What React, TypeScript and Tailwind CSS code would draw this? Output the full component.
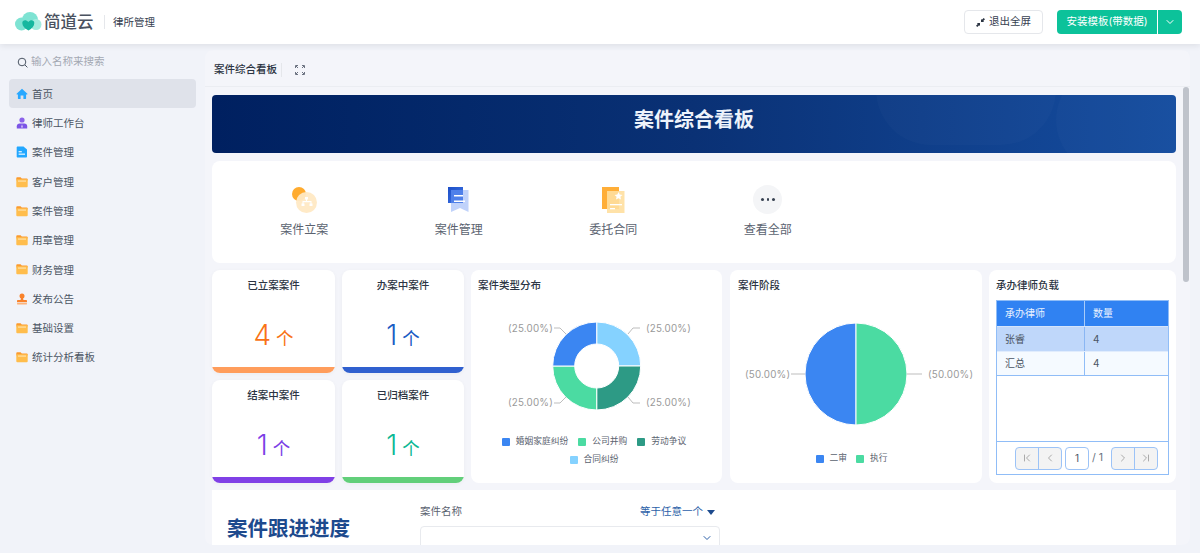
import { ChevronDown, ChevronFirst, ChevronLast, ChevronLeft, ChevronRight } from "lucide-react";

type IconKind = "home" | "user" | "file" | "folder" | "stamp";

const menu: { label: string; icon: IconKind; active?: boolean }[] = [
  { label: "首页", icon: "home", active: true },
  { label: "律师工作台", icon: "user" },
  { label: "案件管理", icon: "file" },
  { label: "客户管理", icon: "folder" },
  { label: "案件管理", icon: "folder" },
  { label: "用章管理", icon: "folder" },
  { label: "财务管理", icon: "folder" },
  { label: "发布公告", icon: "stamp" },
  { label: "基础设置", icon: "folder" },
  { label: "统计分析看板", icon: "folder" },
];

const stats = [
  { title: "已立案案件", value: "4", text: "text-[#f97316]", bar: "bg-[#ff9d5c]" },
  { title: "办案中案件", value: "1", text: "text-[#1a5cc4]", bar: "bg-[#3060cf]" },
  { title: "结案中案件", value: "1", text: "text-[#7c3fe6]", bar: "bg-[#8040e6]" },
  { title: "已归档案件", value: "1", text: "text-[#0cb894]", bar: "bg-[#62cf7a]" },
];

function MenuIcon({ kind }: { kind: IconKind }) {
  if (kind === "home") {
    return (
      <svg width="12" height="12" viewBox="0 0 12 12">
        <path d="M6 .8.6 5.8c-.2.3 0 .6.3.6h1v4.200c0 .3.2.5.5.5h2.200V7.600h2.800v3.500h2.200c.3 0 .5-.2.5-.5V6.400h1c.3 0 .5-.3.3-.6z" fill="#28a8ff" />
      </svg>
    );
  }
  if (kind === "user") {
    return (
      <svg width="12" height="12" viewBox="0 0 12 12">
        <circle cx="6" cy="3" r="2.600" fill="#8b62ea" />
        <path d="M.8 11.500V9.200c0-1.400 1.300-2.600 2.800-2.600h4.800c1.500 0 2.800 1.200 2.800 2.600v2.300z" fill="#7c55e6" />
        <path d="M6 7.200 5.100 10 6 11l.9-1z" fill="#d9ccfa" />
      </svg>
    );
  }
  if (kind === "file") {
    return (
      <svg width="12" height="12" viewBox="0 0 12 12">
        <path d="M1.800.4h5.700L11 3.600v6.900c0 .7-.5 1.100-1.100 1.100H1.800c-.7 0-1.100-.4-1.100-1.100V1.500C.7.900 1.100.4 1.800.4z" fill="#22a7ff" />
        <rect x="2.600" y="5.200" width="3.200" height="1.100" fill="#fff" />
        <rect x="2.600" y="7.600" width="6.400" height="1.100" fill="#fff" />
      </svg>
    );
  }
  if (kind === "stamp") {
    return (
      <svg width="12" height="12" viewBox="0 0 12 12">
        <circle cx="6" cy="2.900" r="2.500" fill="#f9822b" />
        <path d="M5 4.600h2l.4 2.400H10c.6 0 1 .4 1 1v1.200H1V8c0-.6.4-1 1-1h2.600z" fill="#f9822b" />
        <rect x="1" y="10" width="10" height="1.500" rx=".4" fill="#fdb27a" />
      </svg>
    );
  }
  return (
    <svg width="12" height="12" viewBox="0 0 12 12">
      <path d="M1.200 1.200h3.400l1.200 1.200h5c.5 0 .9.4.9.9v1H.3V2.100c0-.5.4-.9.9-.9z" fill="#fb9a2e" />
      <rect x=".3" y="3.200" width="11.400" height="8" rx="1" fill="#ffbd4d" />
      <rect x="2" y="4.600" width="8" height=".9" fill="#ffeec8" />
    </svg>
  );
}

function Logo() {
  return (
    <svg width="27" height="20" viewBox="0 0 27 20">
      <circle cx="6.500" cy="12" r="6.500" fill="#7ee3d3" />
      <circle cx="15" cy="8" r="8" fill="#7ee3d3" />
      <circle cx="21" cy="12.500" r="5.500" fill="#a5ecdf" />
      <path d="M13.500 18.500c-3.500-2-6.200-4.600-6.200-7.600 0-3 3.800-3.800 6-1 2.200-2.800 6-2 6 1 0 3-2.400 5.600-5.800 7.600z" fill="#16b79f" />
    </svg>
  );
}

function CaseFileIcon() {
  return (
    <svg width="25" height="26" viewBox="0 0 25 26">
      <circle cx="7" cy="7" r="7" fill="#ffab2e" />
      <circle cx="14.500" cy="15.500" r="10.500" fill="#ffe9c4" opacity="0.95" />
      <path d="M13 10h3v2.500h-1V14h4.500v2.500h1V19h-3v-2.500h1V15.200h-7v1.300h1V19H9.500v-2.500h1V14H14v-1.500h-1z" fill="#fff" />
    </svg>
  );
}

function CaseManageIcon() {
  return (
    <svg width="21" height="26" viewBox="0 0 21 26">
      <defs>
        <linearGradient id="docBlue" x1="0" y1="0" x2="1" y2="1">
          <stop offset="0" stopColor="#1c4fc7" />
          <stop offset="1" stopColor="#3f74e6" />
        </linearGradient>
      </defs>
      <rect x="0" y="0" width="15" height="16" fill="url(#docBlue)" />
      <path d="M3 3h17.500v22l-8.500-4-9 4z" fill="#b9cdfa" opacity="0.9" />
      <path d="M3 3h12v13H3z" fill="#4f80ea" />
      <rect x="6" y="8" width="9" height="1.500" fill="#fff" />
      <rect x="6" y="13.500" width="11" height="1.500" fill="#fff" />
    </svg>
  );
}

function ContractIcon() {
  return (
    <svg width="23" height="26" viewBox="0 0 23 26">
      <rect x="0" y="0" width="17" height="22" fill="#ffae38" />
      <rect x="5" y="4" width="17.500" height="22" fill="#ffdf9f" opacity="0.9" />
      <path d="m16.500 5 1.200 2.600 2.800.3-2.100 1.900.6 2.800-2.500-1.400-2.500 1.400.6-2.800-2.100-1.900 2.800-.3z" fill="#fff" />
      <rect x="8" y="17" width="12" height="1.300" fill="#fff" />
      <rect x="8" y="21" width="5" height="1.300" fill="#fff" />
    </svg>
  );
}

function Legend({ color, label }: { color: string; label: string }) {
  return (
    <span className="flex items-center gap-[6px]">
      <span className={`w-2 h-2 rounded-[1px] ${color}`} />
      {label}
    </span>
  );
}

function StatCard({ title, value, text, bar }: (typeof stats)[number]) {
  return (
    <div className="h-[103px] bg-white rounded-lg overflow-hidden flex flex-col shadow-[0_1px_4px_rgba(0,0,0,0.04)]">
      <div className="flex-1 text-center pt-[9px]">
        <div className="text-[10.5px] leading-[14px] font-medium text-[#2b3442]">{title}</div>
        <div className={`mt-[25px] flex items-end justify-center gap-[5px] ${text}`}>
          <span className="text-[28px] leading-[34px] font-light">{value}</span>
          <span className="text-[17.5px] leading-[27px]">个</span>
        </div>
      </div>
      <div className={`h-[6px] ${bar}`} />
    </div>
  );
}

function DonutChart() {
  const cx = 125.7;
  const cy = 96;
  return (
    <svg width="251" height="150" viewBox="0 23 251 150" className="block">
      <g stroke="#fff" strokeWidth="1">
        <path fill="#85d2ff" d={`M${cx} ${cy - 44}A44 44 0 0 1 ${cx + 44} ${cy}H${cx + 22}A22 22 0 0 0 ${cx} ${cy - 22}Z`} />
        <path fill="#2d9a85" d={`M${cx + 44} ${cy}A44 44 0 0 1 ${cx} ${cy + 44}V${cy + 22}A22 22 0 0 0 ${cx + 22} ${cy}Z`} />
        <path fill="#4bdba2" d={`M${cx} ${cy + 44}A44 44 0 0 1 ${cx - 44} ${cy}H${cx - 22}A22 22 0 0 0 ${cx} ${cy + 22}Z`} />
        <path fill="#3b86f2" d={`M${cx - 44} ${cy}A44 44 0 0 1 ${cx} ${cy - 44}V${cy - 22}A22 22 0 0 0 ${cx - 22} ${cy}Z`} />
      </g>
      <g fill="none" stroke="#bdbdbd" strokeWidth="1">
        <path d="M157 64l5-6h7" />
        <path d="M157 127l5 6h7" />
        <path d="M95 64l-6-6h-6" />
        <path d="M95 127l-6 6h-6" />
      </g>
      <g fill="#9a9a9a" fontSize="9.800" letterSpacing="0.2">
        <text x="175" y="62">(25.00%)</text>
        <text x="175" y="136">(25.00%)</text>
        <text x="37" y="62">(25.00%)</text>
        <text x="37" y="136">(25.00%)</text>
      </g>
    </svg>
  );
}

function PieChart() {
  const cx = 126;
  const cy = 104;
  return (
    <svg width="252" height="150" viewBox="0 23 252 150" className="block">
      <path d={`M${cx} ${cy - 51}A51 51 0 0 0 ${cx} ${cy + 51}Z`} fill="#3b86f2" stroke="#fff" />
      <path d={`M${cx} ${cy - 51}A51 51 0 0 1 ${cx} ${cy + 51}Z`} fill="#4bdba2" stroke="#fff" />
      <path d="M177 104h15M61 104h14" stroke="#bdbdbd" fill="none" />
      <g fill="#9a9a9a" fontSize="9.800" letterSpacing="0.2">
        <text x="198" y="108">(50.00%)</text>
        <text x="15" y="108">(50.00%)</text>
      </g>
    </svg>
  );
}

function LoadTable() {
  return (
    <div className="mx-[7px] h-[175px] border border-[#90bdf7] flex flex-col text-[10px] text-[#4b5563]">
      <div className="grid grid-cols-[88px_1fr] h-[25px] items-center bg-[#3082f2] text-[#eaf2ff]">
        <div className="px-2 h-full flex items-center border-r border-[#a9ccf9]">承办律师</div>
        <div className="px-2">数量</div>
      </div>
      <div className="grid grid-cols-[88px_1fr] h-[25px] items-center bg-[#bfd7fa] border-t border-[#d4e4fb]">
        <div className="px-2 h-full flex items-center border-r border-[#8ab6f3]">张睿</div>
        <div className="px-2">4</div>
      </div>
      <div className="grid grid-cols-[88px_1fr] h-[25px] items-center bg-[#f5faff] border-t border-[#e0ecfd] border-b border-b-[#90bdf7]">
        <div className="px-2 h-full flex items-center border-r border-[#90bdf7]">汇总</div>
        <div className="px-2">4</div>
      </div>
      <div className="flex-1" />
      <div className="h-[33px] border-t border-[#90bdf7] flex items-center pl-[18px] text-[#6b7280]">
        <div className="flex h-[23px] border border-[#9cc3f7] rounded bg-[#f3f3f3] text-[#aaaaaa]">
          <span className="w-[23px] flex items-center justify-center border-r border-[#9cc3f7]"><ChevronFirst size={12} /></span>
          <span className="w-[22px] flex items-center justify-center"><ChevronLeft size={12} /></span>
        </div>
        <span className="ml-[3px] w-6 h-[23px] border border-[#9cc3f7] rounded bg-white flex items-center justify-center text-[#4b5563]">1</span>
        <span className="ml-[3px] w-[16px] text-[10.5px]">/ 1</span>
        <div className="ml-[3px] flex h-[23px] border border-[#9cc3f7] rounded bg-[#f3f3f3] text-[#aaaaaa]">
          <span className="w-[23px] flex items-center justify-center border-r border-[#9cc3f7]"><ChevronRight size={12} /></span>
          <span className="w-[22px] flex items-center justify-center"><ChevronLast size={12} /></span>
        </div>
      </div>
    </div>
  );
}

export default function App() {
  return (
    <div className="h-[553px] w-[1200px] overflow-hidden flex flex-col bg-[#f1f3f9] font-['Inter','Noto_Sans_CJK_SC',sans-serif]">
      {/* HEADER */}
      <header className="relative z-10 h-[44px] shrink-0 bg-white shadow-[0_2px_6px_rgba(0,0,0,0.08)] flex items-center pl-[15px] pr-[18px]">
        <Logo />
        <span className="ml-[2px] w-[48px] text-[16.5px] leading-none font-medium text-[#4a5260] whitespace-nowrap">简道云</span>
        <span className="ml-3 h-[14px] border-l border-[#e5e7eb]" />
        <span className="ml-2 pt-px text-[10.5px] text-[#374151]">律所管理</span>
        <button className="ml-auto w-[79px] h-6 rounded border border-[#e5e7eb] bg-white flex items-center justify-center gap-1 text-[10.5px] text-[#374151]">
          <svg width="9" height="9" viewBox="0 0 9 9" fill="#2b3442">
            <path d="M5 4V.9l.9.9L7.700 0 9 1.300 7.200 3.100l.9.9zM4 5v3.100l-.9-.9L1.300 9 0 7.700l1.800-1.800-.9-.9z" />
          </svg>
          退出全屏
        </button>
        <button className="ml-[14px] w-[100px] h-6 rounded-l bg-[#0cc29a] text-white text-[10.5px] flex items-center justify-center">
          安装模板(带数据)
        </button>
        <button className="ml-px w-6 h-6 rounded-r bg-[#0cc29a] text-white flex items-center justify-center">
          <ChevronDown size={12} />
        </button>
      </header>

      <div className="flex-1 flex min-h-0">
        {/* SIDEBAR */}
        <aside className="w-[205px] shrink-0 px-[9px]">
          <div className="h-[35px] pt-px pl-2 flex items-center gap-[3px] text-[10.5px] text-[#a3a8b3]">
            <svg width="11" height="11" viewBox="0 0 11 11" fill="none" stroke="#4b5563" strokeWidth="1">
              <circle cx="5" cy="5" r="3.800" />
              <path d="m8 8 2.400 2.400" />
            </svg>
            输入名称来搜索
          </div>
          <nav className="flex flex-col">
            {menu.map((item, i) => (
              <div
                key={i}
                className={`h-[29.3px] rounded pl-[7px] flex items-center gap-1 text-[10.5px] text-[#4b5563] ${
                  item.active ? "bg-[#dfe2ea]" : ""
                }`}
              >
                <MenuIcon kind={item.icon} />
                <span className="pt-[2px]">{item.label}</span>
              </div>
            ))}
          </nav>
        </aside>

        {/* MAIN PANEL */}
        <main className="relative w-[985px] mt-[6px] mb-2 rounded-lg bg-[#f4f5fa] overflow-hidden flex flex-col">
          <div className="h-[37px] shrink-0 border-b border-[#ebedf2] pl-[9px] pt-1 flex items-center text-[10.5px] font-medium text-[#2b3442]">
            案件综合看板
            <span className="ml-1 h-[14px] border-l border-[#e5e7eb]" />
            <svg className="ml-[13px]" width="10" height="10" viewBox="0 0 10 10" fill="none" stroke="#6b7280" strokeWidth="1">
              <path d="M.5 3V.5H3M7 .500h2.500V3M9.500 7v2.500H7M3 9.500H.5V7M1 1l2 2M9 1 7 3M9 9 7 7M1 9l2-2" />
            </svg>
          </div>

          <div className="flex-1 min-h-0 overflow-hidden pl-[7px] pt-2 w-[971px] flex flex-col gap-[7px]">
            {/* BANNER */}
            <div className="relative shrink-0 h-[58px] rounded-sm overflow-hidden bg-gradient-to-r from-[#002060] via-[#0a3175] to-[#154da0] flex items-center justify-center pb-[9px] mb-px">
              <span className="absolute right-[120px] -top-[60px] w-[180px] h-[110px] rounded-full bg-white/[0.02]" />
              <span className="absolute right-[-40px] -top-[30px] w-[160px] h-[110px] rounded-full bg-white/[0.02]" />
              <span className="relative text-[20px] leading-none font-bold text-[#eef3fb]">案件综合看板</span>
            </div>

            {/* SHORTCUTS */}
            <div className="shrink-0 h-[102px] bg-white rounded-lg pl-[15px] pt-[24px] flex">
              {[
                { label: "案件立案", icon: <CaseFileIcon /> },
                { label: "案件管理", icon: <CaseManageIcon /> },
                { label: "委托合同", icon: <ContractIcon /> },
                {
                  label: "查看全部",
                  icon: (
                    <span className="w-[29px] h-[29px] rounded-full bg-[#f4f5f7] flex items-center justify-center gap-[3px]">
                      <span className="w-[2.5px] h-[2.500px] rounded-full bg-[#374151]" />
                      <span className="w-[2.5px] h-[2.500px] rounded-full bg-[#374151]" />
                      <span className="w-[2.5px] h-[2.500px] rounded-full bg-[#374151]" />
                    </span>
                  ),
                },
              ].map((s) => (
                <div key={s.label} className="w-[154.500px] flex flex-col items-center">
                  <div className="h-[29px] flex items-center justify-center">{s.icon}</div>
                  <span className="mt-[8px] text-[12px] leading-[16px] text-[#5b6370]">{s.label}</span>
                </div>
              ))}
            </div>

            {/* STATS + CHARTS */}
            <div className="shrink-0 flex gap-[7px] h-[213px]">
              <div className="w-[252px] grid grid-cols-[123px_122px] gap-[7px]">
                {stats.map((s) => (
                  <StatCard key={s.title} {...s} />
                ))}
              </div>
              <div className="w-[251px] bg-white rounded-lg relative">
                <div className="pl-[7px] pt-[9px] text-[10.5px] leading-[14px] font-medium text-[#2b3442]">案件类型分布</div>
                <DonutChart />
                <div className="absolute left-0 right-0 top-[165px] flex flex-wrap justify-center gap-x-[10px] gap-y-[5px] text-[8.75px] leading-[13px] text-[#5b6370] pl-6 pr-[29px]">
                  <Legend color="bg-[#3b86f2]" label="婚姻家庭纠纷" />
                  <Legend color="bg-[#4bdba2]" label="公司并购" />
                  <Legend color="bg-[#2d9a85]" label="劳动争议" />
                  <Legend color="bg-[#85d2ff]" label="合同纠纷" />
                </div>
              </div>
              <div className="ml-px w-[252px] bg-white rounded-lg relative">
                <div className="pl-2 pt-[9px] text-[10.5px] leading-[14px] font-medium text-[#2b3442]">案件阶段</div>
                <PieChart />
                <div className="absolute left-0 right-0 top-[182px] flex justify-center gap-[9px] text-[8.75px] leading-[13px] text-[#5b6370] pr-[9px]">
                  <Legend color="bg-[#3b86f2]" label="二审" />
                  <Legend color="bg-[#4bdba2]" label="执行" />
                </div>
              </div>
              <div className="w-[187px] bg-white rounded-lg">
                <div className="pl-[7px] pt-[9px] pb-[7px] text-[10.5px] leading-[14px] font-medium text-[#2b3442]">承办律师负载</div>
                <LoadTable />
              </div>
            </div>

            {/* PROGRESS */}
            <div className="shrink-0 h-[80px] bg-white flex">
              <div className="w-[208px] pl-[15px] pt-[25px] text-[20.5px] leading-[28px] font-bold text-[#1d4a8d]">案件跟进进度</div>
              <div className="w-[300px] pt-[15px]">
                <div className="flex items-center justify-between text-[10.5px] leading-[14px] pr-[5px]">
                  <span className="text-[#5b6370]">案件名称</span>
                  <span className="flex items-center gap-[4px] text-[#2c5fa8]">
                    等于任意一个
                    <svg width="8" height="5" viewBox="0 0 8 5"><path d="M0 0h8L4 5z" fill="#1d4a8d" /></svg>
                  </span>
                </div>
                <div className="mt-[7px] h-[40px] border border-[#e8eaee] rounded flex justify-end pr-[6px] pt-[5px] text-[#2c5fa8]">
                  <ChevronDown size={12} />
                </div>
              </div>
            </div>
          </div>

          {/* SCROLLBAR */}
          <div className="absolute right-px top-[37px] w-[6px] h-[195px] rounded bg-[#bfc3cb]" />
        </main>
      </div>
    </div>
  );
}
